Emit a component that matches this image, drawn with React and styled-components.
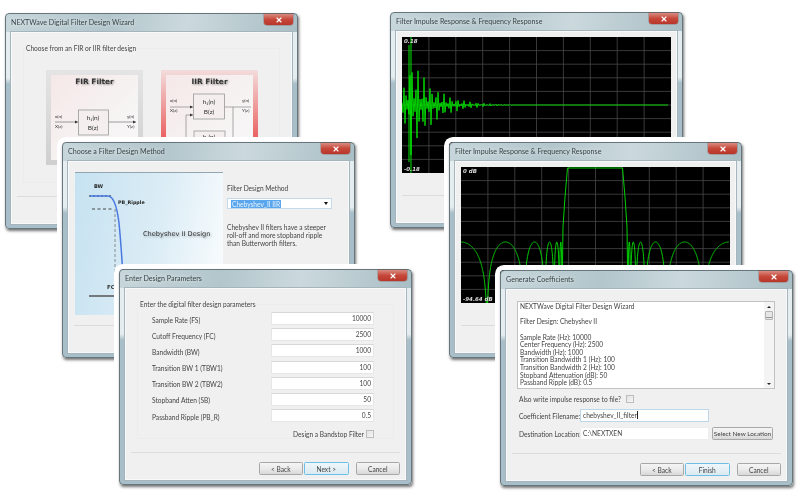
import React from 'react';
import styled, { createGlobalStyle } from 'styled-components';
import { X } from 'lucide-react';

const GlobalStyle = createGlobalStyle`
  html, body {
    margin: 0;
    background: #fff;
    overflow: hidden;
  }
  * {
    box-sizing: border-box;
  }
`;

const SCOPE_W = 269;
const SCOPE_H = 136;

// samples flip sign every step, the slow beat makes the up/down spikes of the plot
function impulsePoints() {
  const pts = [];
  let sign = 1;
  for (let x = 0; x < SCOPE_W - 2; x += 1) {
    const t = x - 9;
    const env = t >= 0 ? Math.exp(-t / 22) : Math.exp(t / 7);
    const beat = Math.cos((Math.PI * t) / 6.6);
    const y = SCOPE_H / 2 - sign * 50 * env * (0.15 + 0.85 * beat ** 4);
    pts.push(`${x.toFixed(1)},${y.toFixed(1)}`);
    sign = -sign;
  }
  return pts.join(' ');
}

const NULLS = [-26, 26, 63, 84, 93, 98.5, 101];

function lobePoints(mirror) {
  const pts = [];
  for (let i = 0; i < NULLS.length - 1; i++) {
    const a = NULLS[i];
    const b = NULLS[i + 1];
    for (let x = Math.max(a, 0); x <= b; x += 0.25) {
      const s = Math.max(Math.sin((Math.PI * (x - a)) / (b - a)), 0.01);
      const y = Math.min(75 - 48 * Math.log10(s), SCOPE_H);
      pts.push([mirror ? 268 - x : x, y]);
    }
  }
  return pts;
}

function responsePoints() {
  const left = lobePoints(false);
  const right = lobePoints(true).reverse();
  const top = [
    [102, 60],
    [104, 30],
    [106.5, 1],
    [161.5, 1],
    [164, 30],
    [166, 60],
  ];
  return [...left, ...top, ...right].map(p => `${p[0].toFixed(1)},${p[1].toFixed(1)}`).join(' ');
}

const FIELDS = [
  ['Sample Rate (FS)', '10000'],
  ['Cutoff Frequency (FC)', '2500'],
  ['Bandwidth (BW)', '1000'],
  ['Transition BW 1 (TBW1)', '100'],
  ['Transition BW 2 (TBW2)', '100'],
  ['Stopband Atten (SB)', '50'],
  ['Passband Ripple (PB_R)', '0.5'],
];

const SUMMARY = [
  'NEXTWave Digital Filter Design Wizard',
  '',
  'Filter Design: Chebyshev II',
  '',
  'Sample Rate (Hz): 10000',
  'Center Frequency (Hz): 2500',
  'Bandwidth (Hz): 1000',
  'Transition Bandwidth 1 (Hz): 100',
  'Transition Bandwidth 2 (Hz): 100',
  'Stopband Attenuation (dB): 50',
  'Passband Ripple (dB): 0.5',
];

function Window({ title, left, top, children }) {
  return (
    <Frame $left={left} $top={top}>
      <TitleBar>
        <Title>{title}</Title>
        <Close>
          <X size={8} strokeWidth={3.5} color="#fff" />
        </Close>
      </TitleBar>
      <Client>{children}</Client>
    </Frame>
  );
}

function WizardFooter({ next, focus }) {
  return (
    <Footer>
      <Button>&lt; Back</Button>
      <Button $primary={focus}>{next}</Button>
      <CancelButton>Cancel</CancelButton>
    </Footer>
  );
}

function Scope({ label, low, children }) {
  const cols = Array.from({ length: 9 }, (_, i) => ((i + 1) * SCOPE_W) / 10);
  const rows = Array.from({ length: 9 }, (_, i) => ((i + 1) * SCOPE_H) / 10);
  return (
    <ScopeBox>
      <svg width={SCOPE_W} height={SCOPE_H} viewBox={`0 0 ${SCOPE_W} ${SCOPE_H}`}>
        {cols.map(x => (
          <line key={x} x1={x} x2={x} y1="0" y2={SCOPE_H} stroke="#484848" strokeWidth="0.8" />
        ))}
        {rows.map(y => (
          <line key={y} x1="0" x2={SCOPE_W} y1={y} y2={y} stroke="#484848" strokeWidth="0.8" />
        ))}
        {children}
        <ScopeText x="2" y="6">{label}</ScopeText>
        <ScopeText x="2" y={SCOPE_H - 2}>{low}</ScopeText>
      </svg>
    </ScopeBox>
  );
}

function FirDiagram() {
  return (
    <Diagram width="87" height="75" viewBox="0 0 87 75">
      <text x="4" y="33">x(n)</text>
      <text x="4" y="43">X(z)</text>
      <text x="76" y="33">y(n)</text>
      <text x="76" y="43">Y(z)</text>
      <path d="M4 37H27M57 37H85" stroke="#777" strokeWidth="0.7" fill="none" />
      <path d="M24 35.5l3 1.5-3 1.5zM82 35.5l3 1.5-3 1.5z" fill="#333" />
      <rect x="27.5" y="25" width="30" height="25" fill="#f4eeee" stroke="#999" strokeWidth="0.8" />
      <text x="42" y="35" textAnchor="middle" fontSize="6.5">h₁(n)</text>
      <text x="42" y="45" textAnchor="middle" fontSize="6.5">B(z)</text>
    </Diagram>
  );
}

function IirDiagram() {
  return (
    <Diagram width="87" height="75" viewBox="0 0 87 75">
      <text x="4" y="17">x(n)</text>
      <text x="4" y="27">X(z)</text>
      <text x="76" y="17">y(n)</text>
      <text x="76" y="27">Y(z)</text>
      <path d="M4 22H27M58 22H85M20 30H27M20 30V70M67 22V70" stroke="#888" strokeWidth="0.7" fill="none" />
      <path d="M24 20.5l3 1.5-3 1.5zM24 28.500l3 1.500-3 1.500z" fill="#333" />
      <rect x="27.500" y="9" width="31" height="25" fill="#f4eeee" stroke="#999" strokeWidth="0.8" />
      <text x="43" y="19" textAnchor="middle" fontSize="6.5">h₁(n)</text>
      <text x="43" y="29" textAnchor="middle" fontSize="6.5">B(z)</text>
      <rect x="28" y="46" width="31" height="25" fill="#f4eeee" stroke="#999" strokeWidth="0.8" />
      <text x="43" y="54" textAnchor="middle" fontSize="6.5">h₂(n)</text>
    </Diagram>
  );
}

function ChebyshevArt() {
  return (
    <ArtPanel>
      <svg width="148" height="143" viewBox="0 0 148 143">
        <text x="19" y="15" fontSize="5" fontWeight="700" fill="#222">BW</text>
        <text x="43" y="31" fontSize="4.800" fontWeight="700" fill="#222">PB_Ripple</text>
        <path d="M14 23H37" stroke="#222" strokeWidth="1" strokeDasharray="2 2" />
        <path d="M17 36H38" stroke="#444" strokeWidth="1" strokeDasharray="3 2.500" />
        <path d="M40 36V130" stroke="#777" strokeWidth="0.8" strokeDasharray="3 2" />
        <path d="M15 23H33C39 23 42 34 44 50C46 70 47 85 49 120" stroke="#4a78e0" strokeWidth="1.500" fill="none" />
        <text x="32" y="116" fontSize="5.500" fontWeight="700" fill="#333">FC</text>
        <path d="M14 123H70" stroke="#555" strokeWidth="1.500" />
        <ArtCaption x="68" y="63">Chebyshev II Design</ArtCaption>
      </svg>
    </ArtPanel>
  );
}

export default function App() {
  return (
    <Desktop>
      <GlobalStyle />

      <Window title="NEXTWave Digital Filter Design Wizard" left={5} top={13}>
        <Group>
          <Legend>Choose from an FIR or IIR filter design</Legend>
          <Cards>
            <Card>
              <CardInner>
                <CardTitle>FIR Filter</CardTitle>
                <FirDiagram />
              </CardInner>
            </Card>
            <Card $selected>
              <CardInner>
                <CardTitle>IIR Filter</CardTitle>
                <IirDiagram />
              </CardInner>
            </Card>
          </Cards>
        </Group>
        <WizardFooter next="Next >" />
      </Window>

      <Window title="Choose a Filter Design Method" left={62} top={142}>
        <MethodBody>
          <ChebyshevArt />
          <MethodColumn>
            <Label>Filter Design Method</Label>
            <Select>
              <Selected>Chebyshev_II IIR</Selected>
              <Arrow />
            </Select>
            <Description>
              Chebyshev II filters have a steeper
              <br />
              roll-off and more stopband ripple
              <br />
              than Butterworth filters.
            </Description>
          </MethodColumn>
        </MethodBody>
        <WizardFooter next="Next >" />
      </Window>

      <Window title="Enter Design Parameters" left={119} top={269}>
        <Group>
          <Legend>Enter the digital filter design parameters</Legend>
          <ParamList>
            {FIELDS.map(([name, value]) => (
              <ParamRow key={name}>
                <Label>{name}</Label>
                <NumberField>{value}</NumberField>
              </ParamRow>
            ))}
            <CheckRow>
              <Label>Design a Bandstop Filter</Label>
              <CheckBox />
            </CheckRow>
          </ParamList>
        </Group>
        <WizardFooter next="Next >" focus />
      </Window>

      <Window title="Filter Impulse Response & Frequency Response" left={390} top={12}>
        <ScopeBody>
          <Scope label="0.18" low="-0.18">
            <polyline points={impulsePoints()} fill="none" stroke="#00e400" strokeWidth="0.9" />
            <path d="M9 0V136M7 8V125" stroke="#00e400" strokeWidth="1" />
          </Scope>
        </ScopeBody>
        <WizardFooter next="Next >" />
      </Window>

      <Window title="Filter Impulse Response & Frequency Response" left={449} top={142}>
        <ScopeBody>
          <Scope label="0 dB" low="-94.64 dB">
            <polyline points={responsePoints()} fill="none" stroke="#00d000" strokeWidth="1" />
          </Scope>
        </ScopeBody>
        <WizardFooter next="Next >" />
      </Window>

      <Window title="Generate Coefficients" left={500} top={270}>
        <CoeffBody>
          <SummaryBox>
            <SummaryText>
              {SUMMARY.map((line, i) => (
                <SummaryLine key={i}>{line}</SummaryLine>
              ))}
            </SummaryText>
            <ScrollBar>
              <ScrollUp />
              <ScrollThumb />
              <ScrollDown />
            </ScrollBar>
          </SummaryBox>
          <AlsoRow>
            <Label>Also write impulse response to file?</Label>
            <CheckBox />
          </AlsoRow>
          <FileRow>
            <Label>Coefficient Filename:</Label>
            <TextField $focused>
              <Caret>chebyshev_II_filter</Caret>
            </TextField>
          </FileRow>
          <FileRow>
            <Label>Destination Location:</Label>
            <TextField>C:\NEXTXEN</TextField>
            <LocationButton>Select New Location</LocationButton>
          </FileRow>
        </CoeffBody>
        <WizardFooter next="Finish" focus />
      </Window>
    </Desktop>
  );
}

const Desktop = styled.div`
  position: relative;
  width: 804px;
  height: 496px;
  overflow: hidden;
  background: #fff;
  font-family: Lato, 'Liberation Sans', sans-serif;
  font-size: 6.6px;
  color: #444;
  filter: blur(0.45px);
`;

const Frame = styled.div`
  position: absolute;
  left: ${p => p.$left}px;
  top: ${p => p.$top}px;
  width: 293px;
  height: 216px;
  display: flex;
  flex-direction: column;
  padding: 0 5px 4px;
  border: 1px solid #66767c;
  border-radius: 4px;
  background:
    linear-gradient(100deg, #c6d6da 0%, #b2c6cc 35%, #cbd9dd 62%, #a9bec5 100%) top / 100% 18px no-repeat,
    linear-gradient(180deg, #e6edf0 0 64px, #a8bec8 70px);
  box-shadow: 1px 2px 3px rgba(0, 0, 0, 0.55), 0 0 0 5px #fff;
`;

const TitleBar = styled.div`
  height: 18px;
  flex: none;
  display: flex;
  align-items: flex-start;
  justify-content: space-between;
  margin-right: -1px;
`;

const Title = styled.span`
  font-size: 7.1px;
  line-height: 17px;
  color: #3a4448;
  text-shadow: 0 0 5px rgba(255, 255, 255, 0.9);
`;

const Close = styled.span`
  width: 29px;
  height: 11px;
  display: flex;
  align-items: center;
  justify-content: center;
  border-radius: 0 0 3px 3px;
  background: linear-gradient(180deg, #d98a80 0%, #c6483a 50%, #b8352a 100%);
  box-shadow: 0 0 0 0.5px rgba(120, 50, 40, 0.5);
`;

const Client = styled.div`
  flex: 1;
  min-height: 0;
  display: flex;
  flex-direction: column;
  background: #f0f0f0;
  border: 1px solid #f7f9fa;
  outline: 1px solid #a5b5bb;
  outline-offset: -0.5px;
`;

const Footer = styled.div`
  margin: auto 5px 0;
  padding: 9px 0 4px;
  border-top: 1px solid #dcdcdc;
  display: flex;
  justify-content: flex-end;
  gap: 1px;
  flex: none;
`;

const Button = styled.div`
  width: 44.5px;
  height: 13px;
  display: flex;
  align-items: center;
  justify-content: center;
  font-size: 6.6px;
  border: 1px solid ${p => (p.$primary ? '#6cc0e6' : '#a8a8a8')};
  border-radius: 1.5px;
  background: ${p =>
    p.$primary
      ? 'linear-gradient(180deg, #eef7fb, #dbe9f0)'
      : 'linear-gradient(180deg, #f4f4f4 0%, #ebebeb 50%, #d8d8d8 100%)'};
`;

const CancelButton = styled(Button)`
  margin-left: 6px;
`;

const Group = styled.fieldset`
  margin: 10px 11px 0 11px;
  padding: 0;
  min-width: 0;
  height: 140px;
  border: 1px solid #ececec;
  flex: none;
`;

const Legend = styled.legend`
  margin-left: 1px;
  padding: 0 1px;
  font-size: 6.6px;
  line-height: 10px;
`;

const Cards = styled.div`
  display: flex;
  gap: 18px;
  padding: 17px 0 0 22px;
`;

const Card = styled.div`
  width: 97px;
  height: 95px;
  padding: 5px;
  background: ${p =>
    p.$selected
      ? 'linear-gradient(180deg, #f3dcdc 0%, #ea5a5a 75%, #e84848 100%)'
      : 'linear-gradient(180deg, #e4e4e4 0%, #cfcfcf 100%)'};
`;

const CardInner = styled.div`
  height: 100%;
  display: flex;
  flex-direction: column;
  background: linear-gradient(135deg, #f6e8e8 0%, #f6f3f3 60%, #f8f8f8 100%);
`;

const CardTitle = styled.div`
  height: 10px;
  text-align: center;
  font-family: 'DejaVu Sans', sans-serif;
  font-size: 7.4px;
  line-height: 14px;
  font-weight: 700;
  color: #333;
  text-shadow: 1px 1px 2px rgba(0, 0, 0, 0.4);
`;

const Diagram = styled.svg`
  flex: none;
  font-size: 4.6px;
  fill: #333;
`;

const MethodBody = styled.div`
  display: flex;
  padding: 10px 0 0 6px;
`;

const ArtPanel = styled.div`
  width: 148px;
  height: 143px;
  flex: none;
  border-top: 1px solid #93a6b0;
  background: linear-gradient(100deg, #c6e2f1 0%, #dcedf6 55%, #fbfdfe 100%);
  font-family: 'DejaVu Sans', sans-serif;
`;

const ArtCaption = styled.text`
  font-size: 6.6px;
  font-weight: 500;
  fill: #333;
  filter: drop-shadow(1px 1px 1px rgba(0, 0, 0, 0.35));
`;

const MethodColumn = styled.div`
  display: flex;
  flex-direction: column;
  padding: 12px 0 0 4px;
  width: 112px;
`;

const Label = styled.span`
  white-space: nowrap;
`;

const Select = styled.div`
  margin-top: 6px;
  width: 105px;
  height: 11px;
  display: flex;
  align-items: center;
  justify-content: space-between;
  padding: 0 3px;
  background: #fff;
  border: 1px solid #c4d9ea;
`;

const Selected = styled.span`
  padding: 0 1px;
  line-height: 8px;
  white-space: nowrap;
  background: #5ba7ee;
  color: #e6f1fc;
`;

const Arrow = styled.span`
  width: 0;
  height: 0;
  border: 2.5px solid transparent;
  border-top: 3px solid #111;
  border-bottom: 0;
`;

const Description = styled.p`
  margin: 14px 0 0;
  line-height: 8px;
  white-space: nowrap;
`;

const ParamList = styled.div`
  display: flex;
  flex-direction: column;
  gap: 3.2px;
  padding: 3px 19px 0 14px;
`;

const ParamRow = styled.div`
  height: 13px;
  display: flex;
  align-items: center;
  justify-content: space-between;
  ${Label} {
    padding-top: 2px;
  }
`;

const Field = styled.div`
  height: 13px;
  background: #fff;
  border: 1px solid #e6e6e6;
  border-top-color: #d8d8d8;
  padding: 0 2px;
  line-height: 10px;
  white-space: nowrap;
`;

const NumberField = styled(Field)`
  width: 103px;
  text-align: right;
`;

const CheckRow = styled.div`
  display: flex;
  align-items: center;
  justify-content: flex-end;
  gap: 2px;
  margin-top: 4px;
  height: 10px;
`;

const CheckBox = styled.span`
  width: 8px;
  height: 8px;
  flex: none;
  border: 1px solid #bdbdbd;
  background: linear-gradient(135deg, #e2e2e2, #f6f6f6);
`;

const ScopeBody = styled.div`
  padding: 5px 0 0 5px;
`;

const ScopeBox = styled.div`
  width: ${SCOPE_W}px;
  height: ${SCOPE_H}px;
  background: #000;
  overflow: hidden;
  svg {
    display: block;
  }
`;

const ScopeText = styled.text`
  font-family: 'DejaVu Sans', sans-serif;
  font-size: 5.5px;
  font-weight: 700;
  font-style: italic;
  fill: #dcdcdc;
`;

const CoeffBody = styled.div`
  display: flex;
  flex-direction: column;
  padding: 11px 11px 0 10px;
`;

const SummaryBox = styled.div`
  height: 88px;
  display: flex;
  background: #fff;
  border: 1px solid #c2c2c2;
`;

const SummaryText = styled.div`
  flex: 1;
  padding: 1px 2px;
`;

const SummaryLine = styled.div`
  height: 7.65px;
  line-height: 7.65px;
  white-space: nowrap;
`;

const ScrollBar = styled.div`
  width: 10px;
  flex: none;
  display: flex;
  flex-direction: column;
  align-items: center;
  padding: 4px 0 3px;
  background: #f4f4f4;
`;

const ScrollUp = styled.span`
  width: 0;
  height: 0;
  border: 2px solid transparent;
  border-bottom: 2.5px solid #222;
  border-top: 0;
`;

const ScrollThumb = styled.span`
  width: 8px;
  height: 9px;
  margin: 3px 0 auto;
  border: 1px solid #b5b5b5;
  border-radius: 1px;
  background: repeating-linear-gradient(180deg, #e6e6e6 0 1px, #999 1px 1.5px);
`;

const ScrollDown = styled.span`
  width: 0;
  height: 0;
  border: 2px solid transparent;
  border-top: 2.5px solid #222;
  border-bottom: 0;
`;

const AlsoRow = styled.div`
  height: 13px;
  margin-top: 3px;
  padding-left: 2px;
  display: flex;
  align-items: center;
  gap: 2px;
  ${Label} {
    width: 105px;
  }
`;

const FileRow = styled.div`
  height: 13px;
  margin-top: 5px;
  padding-left: 2px;
  display: flex;
  align-items: center;
  &:nth-child(3) {
    margin-top: 4px;
  }
  ${Label} {
    width: 61px;
  }
`;

const TextField = styled(Field)`
  width: 129px;
  border-color: ${p => (p.$focused ? '#bcd8ea' : '#ededed')};
`;

const Caret = styled.span`
  border-right: 1px solid #222;
  padding-right: 0.5px;
`;

const LocationButton = styled(Button)`
  width: 61px;
  margin-left: 3px;
  white-space: nowrap;
  font-size: 6.4px;
`;
